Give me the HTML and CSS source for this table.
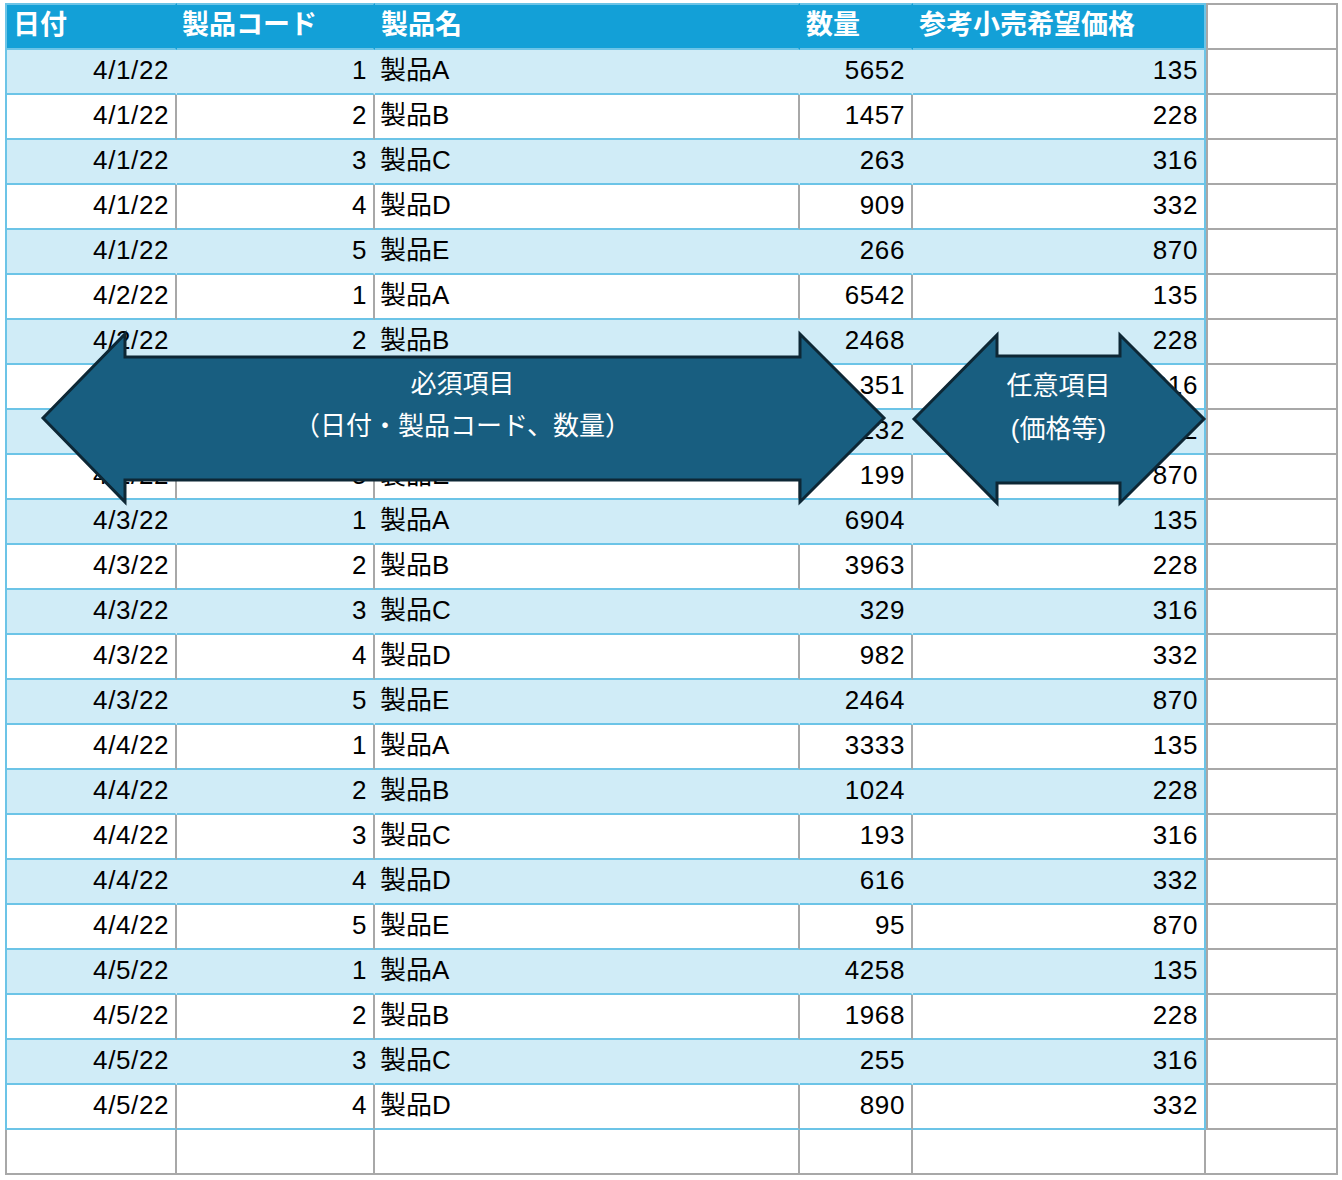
FILE: index.html
```html
<!DOCTYPE html>
<html lang="ja">
<head>
<meta charset="utf-8">
<title>売上データ</title>
<link rel="stylesheet" href="styles.css">
</head>
<body>
<div class="page">
  <div class="sheet">
    <div class="row head">
      <div class="cell c1">日付</div><div class="cell c2">製品コード</div><div class="cell c3">製品名</div><div class="cell c4">数量</div><div class="cell c5">参考小売希望価格</div><div class="cell cx"></div>
    </div>
    <div class="row b"><div class="cell c1">4/1/22</div><div class="cell c2">1</div><div class="cell c3">製品A</div><div class="cell c4">5652</div><div class="cell c5">135</div><div class="cell cx"></div></div>
    <div class="row"><div class="cell c1">4/1/22</div><div class="cell c2">2</div><div class="cell c3">製品B</div><div class="cell c4">1457</div><div class="cell c5">228</div><div class="cell cx"></div></div>
    <div class="row b"><div class="cell c1">4/1/22</div><div class="cell c2">3</div><div class="cell c3">製品C</div><div class="cell c4">263</div><div class="cell c5">316</div><div class="cell cx"></div></div>
    <div class="row"><div class="cell c1">4/1/22</div><div class="cell c2">4</div><div class="cell c3">製品D</div><div class="cell c4">909</div><div class="cell c5">332</div><div class="cell cx"></div></div>
    <div class="row b"><div class="cell c1">4/1/22</div><div class="cell c2">5</div><div class="cell c3">製品E</div><div class="cell c4">266</div><div class="cell c5">870</div><div class="cell cx"></div></div>
    <div class="row"><div class="cell c1">4/2/22</div><div class="cell c2">1</div><div class="cell c3">製品A</div><div class="cell c4">6542</div><div class="cell c5">135</div><div class="cell cx"></div></div>
    <div class="row b"><div class="cell c1">4/2/22</div><div class="cell c2">2</div><div class="cell c3">製品B</div><div class="cell c4">2468</div><div class="cell c5">228</div><div class="cell cx"></div></div>
    <div class="row"><div class="cell c1">4/2/22</div><div class="cell c2">3</div><div class="cell c3">製品C</div><div class="cell c4">351</div><div class="cell c5">316</div><div class="cell cx"></div></div>
    <div class="row b"><div class="cell c1">4/2/22</div><div class="cell c2">4</div><div class="cell c3">製品D</div><div class="cell c4">232</div><div class="cell c5">332</div><div class="cell cx"></div></div>
    <div class="row"><div class="cell c1">4/2/22</div><div class="cell c2">5</div><div class="cell c3">製品E</div><div class="cell c4">199</div><div class="cell c5">870</div><div class="cell cx"></div></div>
    <div class="row b"><div class="cell c1">4/3/22</div><div class="cell c2">1</div><div class="cell c3">製品A</div><div class="cell c4">6904</div><div class="cell c5">135</div><div class="cell cx"></div></div>
    <div class="row"><div class="cell c1">4/3/22</div><div class="cell c2">2</div><div class="cell c3">製品B</div><div class="cell c4">3963</div><div class="cell c5">228</div><div class="cell cx"></div></div>
    <div class="row b"><div class="cell c1">4/3/22</div><div class="cell c2">3</div><div class="cell c3">製品C</div><div class="cell c4">329</div><div class="cell c5">316</div><div class="cell cx"></div></div>
    <div class="row"><div class="cell c1">4/3/22</div><div class="cell c2">4</div><div class="cell c3">製品D</div><div class="cell c4">982</div><div class="cell c5">332</div><div class="cell cx"></div></div>
    <div class="row b"><div class="cell c1">4/3/22</div><div class="cell c2">5</div><div class="cell c3">製品E</div><div class="cell c4">2464</div><div class="cell c5">870</div><div class="cell cx"></div></div>
    <div class="row"><div class="cell c1">4/4/22</div><div class="cell c2">1</div><div class="cell c3">製品A</div><div class="cell c4">3333</div><div class="cell c5">135</div><div class="cell cx"></div></div>
    <div class="row b"><div class="cell c1">4/4/22</div><div class="cell c2">2</div><div class="cell c3">製品B</div><div class="cell c4">1024</div><div class="cell c5">228</div><div class="cell cx"></div></div>
    <div class="row"><div class="cell c1">4/4/22</div><div class="cell c2">3</div><div class="cell c3">製品C</div><div class="cell c4">193</div><div class="cell c5">316</div><div class="cell cx"></div></div>
    <div class="row b"><div class="cell c1">4/4/22</div><div class="cell c2">4</div><div class="cell c3">製品D</div><div class="cell c4">616</div><div class="cell c5">332</div><div class="cell cx"></div></div>
    <div class="row"><div class="cell c1">4/4/22</div><div class="cell c2">5</div><div class="cell c3">製品E</div><div class="cell c4">95</div><div class="cell c5">870</div><div class="cell cx"></div></div>
    <div class="row b"><div class="cell c1">4/5/22</div><div class="cell c2">1</div><div class="cell c3">製品A</div><div class="cell c4">4258</div><div class="cell c5">135</div><div class="cell cx"></div></div>
    <div class="row"><div class="cell c1">4/5/22</div><div class="cell c2">2</div><div class="cell c3">製品B</div><div class="cell c4">1968</div><div class="cell c5">228</div><div class="cell cx"></div></div>
    <div class="row b"><div class="cell c1">4/5/22</div><div class="cell c2">3</div><div class="cell c3">製品C</div><div class="cell c4">255</div><div class="cell c5">316</div><div class="cell cx"></div></div>
    <div class="row"><div class="cell c1">4/5/22</div><div class="cell c2">4</div><div class="cell c3">製品D</div><div class="cell c4">890</div><div class="cell c5">332</div><div class="cell cx"></div></div>
    <div class="row empty"><div class="cell c1"></div><div class="cell c2"></div><div class="cell c3"></div><div class="cell c4"></div><div class="cell c5"></div><div class="cell cx"></div></div>
  </div>

  <svg class="arrows" width="1342" height="1180" viewBox="0 0 1342 1180" xmlns="http://www.w3.org/2000/svg">
    <polygon class="arrow" points="43,418 125,334 125,357 800,357 800,334 884,418 800,502 800,480 125,480 125,502"/>
    <polygon class="arrow" points="914,419 997,335 997,356 1120,356 1120,335 1204,419 1120,503 1120,483 997,483 997,503"/>
  </svg>
  <div class="label label-required">
    <div>必須項目</div>
    <div>（日付・製品コード、数量）</div>
  </div>
  <div class="label label-optional">
    <div>任意項目</div>
    <div>(価格等)</div>
  </div>
</div>
</body>
</html>
```

FILE: styles.css
```css
* {
  box-sizing: border-box;
}

body {
  margin: 0;
  background: #ffffff;
  font-family: "Liberation Sans", "Noto Sans CJK JP", sans-serif;
}

.page {
  position: relative;
  width: 1342px;
  height: 1180px;
  padding: 3px 0 0 5px;
  overflow: hidden;
}

.sheet {
  display: flex;
  flex-direction: column;
  width: 1333px;
}

.row {
  display: flex;
  height: 45px;
}

.row.head {
  height: 47px;
}

.cell {
  height: 100%;
  display: flex;
  align-items: center;
  justify-content: flex-end;
  padding: 0 6px 3px 6px;
  font-size: 26px;
  line-height: 30px;
  letter-spacing: 0.6px;
  color: #000000;
  white-space: nowrap;
  border-right: 2px solid #a8a8a8;
  border-bottom: 2px solid #6cc4e7;
}

.c1 {
  width: 172px;
  border-left: 2px solid #6cc4e7;
}

.c2 {
  width: 198px;
}

.c3 {
  width: 425px;
  justify-content: flex-start;
  padding-left: 5px;
  letter-spacing: 0;
}

.c4 {
  width: 113px;
}

.c5 {
  width: 293px;
  border-right-color: #6cc4e7;
}

.cx {
  width: 132px;
  border-left: 2px solid #a8a8a8;
  border-bottom-color: #a8a8a8;
}

/* header */
.head .cell {
  background: #13a0d7;
  color: #ffffff;
  font-weight: 700;
  font-size: 27px;
  letter-spacing: 0;
  justify-content: flex-start;
  padding-left: 6px;
  padding-bottom: 3px;
  border-top: 2px solid #6cc4e7;
  border-right-color: #13a0d7;
}

.head .c2 {
  padding-left: 5px;
}

.head .c5 {
  border-right-color: #6cc4e7;
}

.head .cx {
  background: #ffffff;
  border-top-color: #a8a8a8;
  border-right-color: #a8a8a8;
}

/* banded rows */
.b .cell {
  background: #d0ecf7;
  border-right-color: #d0ecf7;
}

.b .c5 {
  border-right-color: #6cc4e7;
}

.b .cx {
  background: #ffffff;
  border-right-color: #a8a8a8;
}

/* trailing empty row */
.empty .cell {
  border-bottom-color: #a8a8a8;
}

.empty .c1 {
  border-left-color: #a8a8a8;
}

.empty .c5 {
  width: 291px;
  border-right-width: 0;
}

.empty .cx {
  width: 134px;
}

/* arrows overlay */
.arrows {
  position: absolute;
  left: 0;
  top: 0;
}

.arrow {
  fill: #185e80;
  stroke: #0d2735;
  stroke-width: 3;
  stroke-linejoin: miter;
}

.label {
  position: absolute;
  color: #ffffff;
  font-size: 26px;
  line-height: 42px;
  text-align: center;
  white-space: nowrap;
}

.label-required {
  left: 125px;
  width: 675px;
  top: 363px;
}

.label-optional {
  left: 997px;
  width: 123px;
  top: 365px;
  line-height: 43px;
}
```
